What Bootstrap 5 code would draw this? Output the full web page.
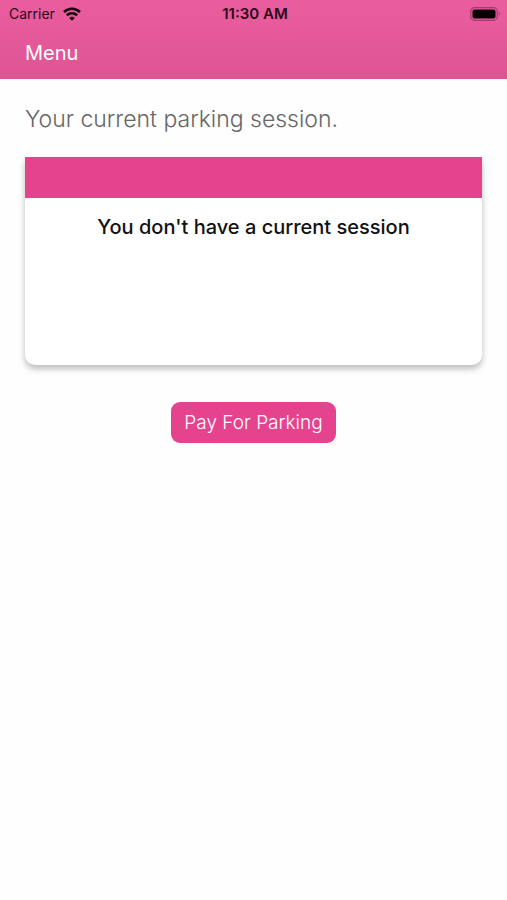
<!DOCTYPE html>
<html lang="en">
<head>
<meta charset="utf-8">
<meta name="viewport" content="width=device-width, initial-scale=1">
<title>Parking session</title>
<link rel="stylesheet" href="https://cdn.jsdelivr.net/npm/bootstrap@5.3.0/dist/css/bootstrap.min.css">
<style>
  :root { --brand: #e6438f; --gutter: 25px; }
  body { font-family: Inter, "Liberation Sans", sans-serif; background: #fefefe; }
  .app-header { background: linear-gradient(#e85b9d 25%, #dd5493); }
  .status-bar { height: 27px; padding: 0 6px 0 9px; font-size: 14px; line-height: 27px; color: #2b0a1b; }
  .status-bar .clock { color: #2b0a1b; font-size: 15px; font-weight: 600; }
  .menu-btn { height: 52px; padding: 0 var(--gutter); font-size: 20px; font-weight: 400; line-height: 52px; }
  .page { padding: 24px var(--gutter); }
  .intro { font-size: 23px; font-weight: 300; line-height: 32px; color: #666; margin-bottom: 22px; }
  .session { border-radius: 0 0 10px 10px; box-shadow: 0 4px 6px rgba(0, 0, 0, .26); min-height: 208px; }
  .session-top { height: 41px; background: var(--brand); }
  .session-text { font-size: 20px; font-weight: 500; line-height: 24px; padding-top: 17px; color: #111; }
  .pay-btn { margin-top: 37px; height: 41px; padding: 0 13px; font-size: 19px; font-weight: 300; line-height: 41px; border-radius: 9px;
    --bs-btn-bg: var(--brand); --bs-btn-color: #fff; --bs-btn-border-width: 0;
    --bs-btn-hover-bg: #d33880; --bs-btn-hover-color: #fff; --bs-btn-active-bg: #c23074; --bs-btn-active-color: #fff; }
</style>
</head>
<body>
<header class="app-header">
  <div class="status-bar row g-0 align-items-center">
    <div class="col d-flex align-items-center gap-2">
      <span>Carrier</span>
      <svg width="18" height="14" viewBox="0 0 18 14" fill="none" stroke="#16030c" stroke-width="2.6" aria-hidden="true">
        <path d="M1 5C5.500 .6 12.500 .6 17 5"/>
        <path d="M3.800 8.300c2.900-2.800 7.500-2.800 10.400 0"/>
        <path d="M6.200 10.900c1.600-1.500 4-1.500 5.600 0L9 13.700z" fill="#16030c" stroke="none"/>
      </svg>
    </div>
    <div class="col-auto clock">11:30 AM</div>
    <div class="col d-flex justify-content-end">
      <svg width="31" height="14" viewBox="0 0 31 14" aria-hidden="true">
        <rect x=".7" y=".7" width="26.600" height="12.600" rx="3.800" fill="none" stroke="#a33b6c" stroke-width="1.200"/>
        <rect x="2.500" y="2.500" width="23" height="9" rx="2" fill="#080004"/>
        <path d="M28.800 4.800q2 2.200 0 4.400z" fill="#a33b6c"/>
      </svg>
    </div>
  </div>
  <nav><button type="button" class="menu-btn btn border-0 rounded-0 text-white">Menu</button></nav>
</header>
<main class="page">
  <p class="intro">Your current parking session.</p>
  <section class="session bg-white">
    <div class="session-top"></div>
    <p class="session-text text-center mb-0">You don't have a current session</p>
  </section>
  <div class="text-center">
    <button type="button" class="pay-btn btn">Pay For Parking</button>
  </div>
</main>
<script src="https://cdn.jsdelivr.net/npm/bootstrap@5.3.0/dist/js/bootstrap.bundle.min.js"></script>
</body>
</html>
